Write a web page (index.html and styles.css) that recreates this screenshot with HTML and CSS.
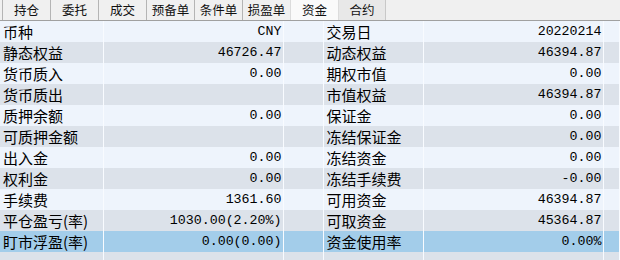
FILE: index.html
```html
<!DOCTYPE html>
<html>
<head>
  <link rel="stylesheet" href="styles.css">
</head>
<body>
  <div class="tabs">
    <div class="tab">持仓</div>
    <div class="tab">委托</div>
    <div class="tab">成交</div>
    <div class="tab">预备单</div>
    <div class="tab">条件单</div>
    <div class="tab">损盈单</div>
    <div class="tab active">资金</div>
    <div class="tab last">合约</div>
  </div>

  <table class="funds">
    <colgroup>
      <col class="c-label"><col class="c-value"><col class="c-gap"><col class="c-label2"><col class="c-value"><col>
    </colgroup>
    <tr><td class="label">币种</td><td class="num">CNY</td><td></td><td class="label">交易日</td><td class="num">20220214</td><td></td></tr>
    <tr><td class="label">静态权益</td><td class="num">46726.47</td><td></td><td class="label">动态权益</td><td class="num">46394.87</td><td></td></tr>
    <tr><td class="label">货币质入</td><td class="num">0.00</td><td></td><td class="label">期权市值</td><td class="num">0.00</td><td></td></tr>
    <tr><td class="label">货币质出</td><td class="num"></td><td></td><td class="label">市值权益</td><td class="num">46394.87</td><td></td></tr>
    <tr><td class="label">质押余额</td><td class="num">0.00</td><td></td><td class="label">保证金</td><td class="num">0.00</td><td></td></tr>
    <tr><td class="label">可质押金额</td><td class="num"></td><td></td><td class="label">冻结保证金</td><td class="num">0.00</td><td></td></tr>
    <tr><td class="label">出入金</td><td class="num">0.00</td><td></td><td class="label">冻结资金</td><td class="num">0.00</td><td></td></tr>
    <tr><td class="label">权利金</td><td class="num">0.00</td><td></td><td class="label">冻结手续费</td><td class="num">-0.00</td><td></td></tr>
    <tr><td class="label">手续费</td><td class="num">1361.60</td><td></td><td class="label">可用资金</td><td class="num">46394.87</td><td></td></tr>
    <tr><td class="label">平仓盈亏(率)</td><td class="num">1030.00(2.20%)</td><td></td><td class="label">可取资金</td><td class="num">45364.87</td><td></td></tr>
    <tr class="selected"><td class="label">盯市浮盈(率)</td><td class="num">0.00(0.00)</td><td></td><td class="label">资金使用率</td><td class="num">0.00%</td><td></td></tr>
    <tr><td class="label"></td><td class="num"></td><td></td><td class="label"></td><td class="num"></td><td></td></tr>
  </table>
</body>
</html>
```

FILE: styles.css
```css
:root {
  --row-light: #eef4fc;
  --row-dark: #dce2ea;
  --row-selected: #a3cdea;
  --grid: #f8fbff;
  --tab-bg: #f0f0f0;
  --tab-line: #a0a0a0;
}

* {
  margin: 0;
  padding: 0;
  box-sizing: border-box;
}

body {
  background: var(--row-light);
  color: #000;
  font-family: "Noto Sans CJK SC", sans-serif;
  width: 620px;
  height: 260px;
  overflow: hidden;
}

.tabs {
  display: flex;
  height: 21px;
  background: var(--tab-bg);
  border-bottom: 1px solid var(--tab-line);
  padding-left: 2px;
}

.tab {
  width: 48px;
  height: 20px;
  border-left: 1px solid #b4b4b4;
  font-size: 12.5px;
  line-height: 20px;
  text-align: center;
  color: #111;
}

.tab:first-child {
  width: 48px;
}

.tab.active {
  background: #fafafa;
  border-left-color: #dcdcdc;
}

.tab.last {
  background: #e8e8e8;
  border-left-color: #dcdcdc;
  border-right: 1px solid #c8c8c8;
}

.funds {
  border-collapse: collapse;
  table-layout: fixed;
  width: 620px;
}

.c-label { width: 103px; }
.c-value { width: 180px; }
.c-gap { width: 40px; }
.c-label2 { width: 100px; }

.funds tr {
  height: 21px;
  background: var(--row-light);
}

.funds tr:nth-child(even) {
  background: var(--row-dark);
}

.funds tr.selected {
  background: var(--row-selected);
}

.funds td {
  border-right: 1px solid var(--grid);
  height: 21px;
  padding: 0;
  white-space: nowrap;
  overflow: hidden;
  vertical-align: middle;
}

.label {
  font-size: 15px;
  line-height: 21px;
  padding-left: 3px !important;
}

.num {
  font-family: "Liberation Mono", monospace;
  font-size: 13.3px;
  text-align: right;
  padding-right: 1px !important;
}
```
